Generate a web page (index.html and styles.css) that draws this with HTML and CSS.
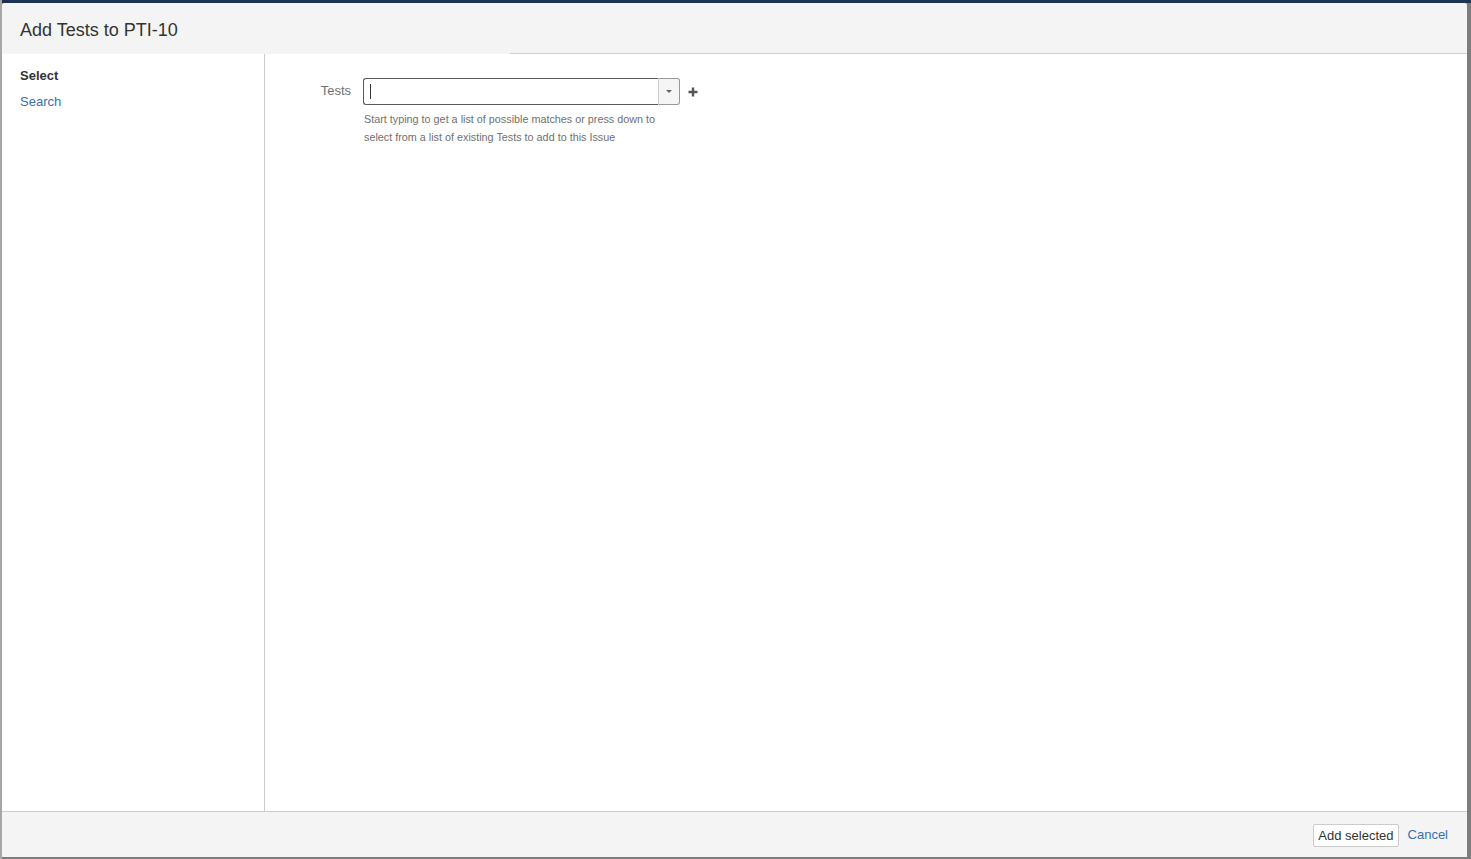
FILE: index.html
```html
<!DOCTYPE html>
<html lang="en">
<head>
    <meta charset="UTF-8">
    <meta name="viewport" content="width=device-width, initial-scale=1.0">
    <title>Add Tests to PTI-10</title>
    <link rel="stylesheet" href="styles.css">
</head>
<body>
    <div class="backdrop">
        <!-- dialog -->
        <div class="dialog">
            <h2 class="dialog-header">Add Tests to PTI-10</h2>
            <div class="dialog-body">
                <ul class="dialog-nav">
                    <li class="selected">Select</li>
                    <li><a href="#">Search</a></li>
                </ul>
                <div class="dialog-panel">
                    <div class="field-group">
                        <label class="field-label">Tests</label>
                        <div class="field">
                            <div class="picker">
                                <div class="picker-input"><span class="caret"></span></div>
                                <span class="picker-drop"><i class="tri"></i></span>
                                <span class="picker-add">
                                    <svg width="10" height="10" viewBox="0 0 10 10"><path d="M3.8 0.5h2.4v3.3h3.3v2.4H6.2v3.3H3.8V6.2H0.5V3.8h3.3z" fill="#555"/></svg>
                                </span>
                            </div>
                            <div class="description">
                                Start typing to get a list of possible matches or press down to<br>
                                select from a list of existing Tests to add to this Issue
                            </div>
                        </div>
                    </div>
                </div>
            </div>
            <div class="dialog-footer">
                <button class="btn">Add selected</button>
                <a class="cancel" href="#">Cancel</a>
            </div>
        </div>
    </div>
</body>
</html>
```

FILE: styles.css
```css
html, body { height: 100%; margin: 0; }
body {
    font-family: "Liberation Sans", Arial, sans-serif;
    font-size: 13px;
    color: #333;
    background: #7d7d7d;
}
a { color: #3572b0; text-decoration: none; }

.backdrop {
    height: 100%;
    box-sizing: border-box;
    padding: 3px 4px 2px 2px;
    background: linear-gradient(#1c3451, #1c3451) top / 100% 3px no-repeat, #7d7d7d;
    box-shadow: inset 2px 0 0 #a6a6a6;
}
.dialog {
    height: 100%;
    display: flex;
    flex-direction: column;
    background: #fff;
    border-radius: 3px 3px 0 0;
}
.dialog-header {
    margin: 0;
    height: 51px;
    box-sizing: border-box;
    padding: 15px 18px 0 18px;
    font-size: 18px;
    font-weight: normal;
    line-height: 24px;
    color: #333;
    background: linear-gradient(#cfcfcf, #cfcfcf) right bottom / calc(100% - 508px) 1px no-repeat, #f4f4f4;
    border-radius: 3px 3px 0 0;
}
.dialog-body { flex: 1; display: flex; min-height: 0; }
.dialog-nav {
    list-style: none;
    margin: 0;
    padding: 9px 0 0 18px;
    width: 244px;
    border-right: 1px solid #ccc;
}
.dialog-nav li { line-height: 26px; }
.dialog-nav .selected { font-weight: bold; color: #333; }

.dialog-panel { flex: 1; padding-top: 24px; }
.field-group { display: flex; }
.field-label {
    width: 86px;
    margin-right: 12px;
    text-align: right;
    color: #707070;
    line-height: 26px;
}
.picker { display: flex; align-items: center; }
.picker-input {
    width: 295px;
    height: 27px;
    box-sizing: border-box;
    border: 1px solid #5a5a5a;
    border-right: none;
    border-radius: 3px 0 0 3px;
    display: flex;
    align-items: center;
    padding-left: 6px;
}
.caret { width: 1px; height: 15px; background: #333; }
.picker-drop {
    width: 22px;
    height: 27px;
    box-sizing: border-box;
    border: 1px solid #999;
    border-left: 1px solid #ccc;
    border-radius: 0 3px 3px 0;
    background: #f5f5f5;
    display: flex;
    align-items: center;
    justify-content: center;
}
.tri {
    width: 0;
    height: 0;
    border-left: 3px solid transparent;
    border-right: 3px solid transparent;
    border-top: 3px solid #666;
}
.picker-add { margin-left: 8px; display: flex; }
.description {
    margin-top: 5px;
    margin-left: 1px;
    font-size: 10.8px;
    line-height: 18px;
    color: #707070;
}

.dialog-footer {
    height: 46px;
    box-sizing: border-box;
    border-top: 1px solid #ccc;
    background: #f4f4f4;
    display: flex;
    align-items: flex-start;
    justify-content: flex-end;
    padding: 12px 19px 0 0;
    gap: 9px;
}
.btn {
    font-family: inherit;
    font-size: 13px;
    line-height: 15px;
    color: #333;
    background: #fff;
    border: 1px solid #ccc;
    border-radius: 2px;
    padding: 3px 4px;
    height: 23px;
}
.cancel { line-height: 22px; }
```
